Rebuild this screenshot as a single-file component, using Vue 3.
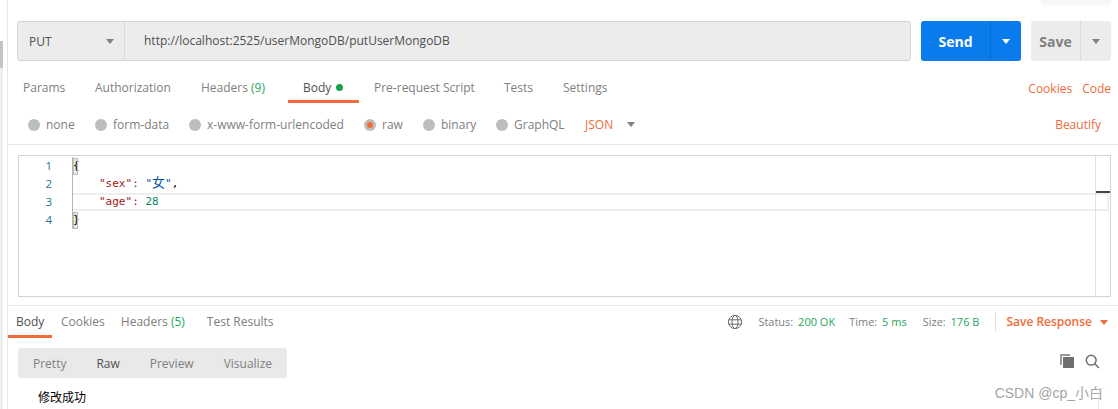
<script setup>
const reqTabs = [
  { label: 'Params', width: 72 },
  { label: 'Authorization', width: 106 },
  { label: 'Headers', count: '(9)', width: 83 },
]
const reqTabsRight = [
  { label: 'Pre-request Script', width: 130 },
  { label: 'Tests', width: 59 },
  { label: 'Settings', width: 60 },
]
const radios = [
  { label: 'none', width: 67 },
  { label: 'form-data', width: 94 },
  { label: 'x-www-form-urlencoded', width: 175 },
  { label: 'raw', on: true, width: 59 },
  { label: 'binary', width: 73 },
  { label: 'GraphQL', width: 71 },
]
const status = [
  { k: 'Status:', v: '200 OK' },
  { k: 'Time:', v: '5 ms' },
  { k: 'Size:', v: '176 B' },
]
</script>

<template>
  <div class="page">
    <div class="rail"><div class="thumb"></div></div>
    <div class="main">
      <div class="corner"><span></span></div>
      <div class="url-row">
        <div class="url-box">
          <div class="method"><span>PUT</span><i class="caret grey"></i></div>
          <div class="url">http://localhost:2525/userMongoDB/putUserMongoDB</div>
        </div>
        <div class="send">
          <span class="send-label">Send</span>
          <span class="send-drop"><i class="caret white"></i></span>
        </div>
        <div class="save">
          <span class="save-label">Save</span>
          <span class="save-drop"><i class="caret grey"></i></span>
        </div>
      </div>

      <div class="tabs">
        <span v-for="t in reqTabs" :key="t.label" class="tab" :style="{ width: t.width + 'px' }">
          {{ t.label }} <em v-if="t.count">{{ t.count }}</em>
        </span>
        <span class="tab body-tab">Body <b class="dot"></b></span>
        <span v-for="t in reqTabsRight" :key="t.label" class="tab" :style="{ width: t.width + 'px' }">{{ t.label }}</span>
        <span class="links"><span>Cookies</span><span>Code</span></span>
      </div>

      <div class="radios">
        <span v-for="r in radios" :key="r.label" class="radio" :style="{ width: r.width + 'px' }">
          <i class="disc" :class="{ on: r.on }"></i>{{ r.label }}
        </span>
        <span class="json">JSON</span><i class="caret grey json-caret"></i>
        <span class="beautify">Beautify</span>
      </div>

      <div class="editor-wrap">
        <div class="editor">
          <div class="gutter">
            <div>1</div><div>2</div><div>3</div><div>4</div>
          </div>
          <div class="code">
            <div class="line"><span class="br">{</span></div>
            <div class="line ind"><span class="key">"sex"</span><span class="colon">:</span> <span class="str">"<span class="cjk">女</span>"</span>,</div>
            <div class="line ind active"><span class="key">"age"</span><span class="colon">:</span> <span class="num">28</span></div>
            <div class="line"><span class="br">}</span></div>
          </div>
          <div class="ruler"><i></i></div>
        </div>
      </div>

      <div class="res-tabs">
        <span class="res-tab res-active">Body</span>
        <span class="res-tab cookies">Cookies</span>
        <span class="res-tab headers">Headers <em>(5)</em></span>
        <span class="res-tab tests">Test Results</span>
        <div class="status">
          <svg class="globe" width="16" height="16" viewBox="0 0 16 16" fill="none" stroke="#6b6b6b" stroke-width="1">
            <circle cx="8" cy="8" r="6.6" />
            <ellipse cx="8" cy="8" rx="3" ry="6.6" />
            <path d="M1.6 5.8h12.8M1.6 10.2h12.8" />
          </svg>
          <span v-for="s in status" :key="s.k" class="stat">{{ s.k }} <em>{{ s.v }}</em></span>
          <span class="save-res">Save Response<i class="caret orange"></i></span>
        </div>
      </div>

      <div class="view-row">
        <div class="views">
          <span>Pretty</span><span class="cur">Raw</span><span>Preview</span><span>Visualize</span>
        </div>
        <div class="tools">
          <svg width="15" height="15" viewBox="0 0 15 15">
            <path d="M0 0h10v2H2v9H0z" fill="#9a9a9a" />
            <rect x="3" y="3" width="11" height="11" fill="#6f6f6f" />
          </svg>
          <svg width="15" height="15" viewBox="0 0 15 15" fill="none" stroke="#6f6f6f" stroke-width="1.5">
            <circle cx="6.2" cy="6.2" r="4.9" />
            <path d="M9.8 9.8L14 14" />
          </svg>
        </div>
      </div>

      <div class="result">
        <span>修改成功</span>
        <span class="mark">CSDN @cp_小白</span>
      </div>
    </div>
  </div>
</template>

<style>
html, body { margin: 0; background: #fff; overflow: hidden; }
</style>

<style scoped>
.page {
  width: 1118px;
  height: 409px;
  display: flex;
  overflow: hidden;
  position: relative;
  font: 12px "Open Sans", "Noto Sans CJK SC", sans-serif;
  color: #808080;
  background: #fff;
}
.page::after {
  content: "";
  position: absolute;
  left: 1098px;
  top: 388px;
  width: 6px;
  height: 21px;
  border-left: 1px solid #e8e8e8;
  border-top: 1px solid #e8e8e8;
}
.rail {
  width: 8px;
  flex: none;
  box-sizing: border-box;
  border-right: 1px solid #e6e6e6;
  padding-top: 41px;
  background: linear-gradient(#fff 41px, #efefef 41px) 0 0 / 3px 100% no-repeat;
}
.thumb {
  width: 3px;
  height: 27px;
  background: #c4c4c4;
}
.main { flex: 1; min-width: 0; display: flex; flex-direction: column; }
.corner {
  height: 5px;
  margin-bottom: 16px;
  padding-right: 7px;
  display: flex;
  justify-content: flex-end;
}
.corner span {
  width: 70px;
  height: 5px;
  border-radius: 0 0 4px 4px;
  background: #f7f7f7;
}
.url-row {
  height: 40px;
  display: flex;
  padding-left: 9px;
}
.url-box {
  width: 894px;
  box-sizing: border-box;
  display: flex;
  background: #ececec;
  border: 1px solid #d4d4d4;
  border-radius: 3px;
}
.method {
  width: 107px;
  flex: none;
  box-sizing: border-box;
  display: flex;
  align-items: center;
  justify-content: space-between;
  padding: 1px 10px 0 11px;
  border-right: 1px solid #d9d9d9;
  color: #505050;
}
.url {
  flex: 1;
  padding-left: 19px;
  line-height: 38px;
  color: #505050;
}
.caret {
  display: inline-block;
  width: 0;
  height: 0;
  border-left: 4px solid transparent;
  border-right: 4px solid transparent;
  border-top: 5px solid #808080;
}
.caret.white { border-top-color: #fff; }
.caret.orange { border-top-color: #f26b3a; margin-left: 8px; vertical-align: 1px; }
.send {
  margin-left: 10px;
  width: 100px;
  display: flex;
  background: #097bed;
  border-radius: 3px;
  color: #fff;
  font-weight: 700;
  font-size: 14px;
}
.send-label { width: 69px; text-align: center; line-height: 41px; }
.send-drop {
  flex: 1;
  display: flex;
  align-items: center;
  justify-content: center;
  border-left: 1px solid #0a6bcc;
}
.save {
  margin-left: 10px;
  width: 80px;
  display: flex;
  background: #ececec;
  border-radius: 3px;
  font-weight: 700;
  font-size: 14px;
  color: #808080;
}
.save-label { width: 49px; text-align: center; line-height: 41px; }
.save-drop {
  flex: 1;
  display: flex;
  align-items: center;
  justify-content: center;
  border-left: 1px solid #d9d9d9;
}
.tabs {
  height: 42px;
  box-sizing: border-box;
  display: flex;
  align-items: center;
  padding-left: 15px;
  padding-top: 12px;
}
.tab { flex: none; white-space: nowrap; line-height: 30px; }
.tab em, .res-tab em, .stat em { font-style: normal; color: #26a65b; }
.stat em { margin-left: 2px; }
.body-tab {
  width: 71px;
  margin-left: 4px;
  margin-right: 15px;
  height: 30px;
  box-sizing: border-box;
  padding-left: 15px;
  border-bottom: 3px solid #f26b3a;
  color: #505050;
  align-self: flex-end;
}
.dot {
  display: inline-block;
  width: 7px;
  height: 7px;
  margin-left: 2px;
  border-radius: 50%;
  background: #16a34a;
  vertical-align: 1px;
}
.links {
  margin-left: auto;
  padding-right: 7px;
  display: flex;
  gap: 10px;
  color: #f26b3a;
}
.radios {
  height: 42px;
  box-sizing: border-box;
  display: flex;
  align-items: center;
  padding-left: 20px;
  padding-top: 2px;
  border-bottom: 1px solid #e6e6e6;
}
.radio { flex: none; display: flex; align-items: center; white-space: nowrap; }
.disc {
  width: 12px;
  height: 12px;
  flex: none;
  margin-right: 6px;
  border-radius: 50%;
  background: #bdbdbd;
}
.disc.on { position: relative; }
.disc.on::after {
  content: "";
  position: absolute;
  left: 3px;
  top: 3px;
  width: 6px;
  height: 6px;
  border-radius: 50%;
  background: #f26b3a;
}
.json { color: #f26b3a; margin-left: 18px; }
.json-caret { margin-left: 14px; }
.beautify { margin-left: auto; padding-right: 17px; color: #f26b3a; }
.editor-wrap { padding: 10px 7px 8px 10px; border-bottom: 1px solid #e6e6e6; }
.editor {
  height: 142px;
  box-sizing: border-box;
  display: flex;
  position: relative;
  padding-top: 1px;
  border: 1px solid #d4d4d4;
  font-size: 11px;
  line-height: 18px;
}
.gutter {
  width: 53px;
  flex: none;
  box-sizing: border-box;
  padding-right: 20px;
  text-align: right;
  color: #237893;
  font-size: 11.5px;
}
.code {
  flex: 1;
  border-left: 1px solid #b5b5b5;
  color: #000;
  height: 72px;
  font-family: "DejaVu Sans Mono", "Noto Sans CJK SC", monospace;
}
.line { height: 18px; white-space: pre; }
.ind { padding-left: 26px; }
.active {
  box-sizing: border-box;
  border: 2px solid #eeeeee;
  border-left: 0;
  line-height: 14px;
  margin-right: 1px;
}
.br {
  display: inline-block;
  width: 5px;
  height: 17px;
  line-height: 16px;
  background: #e4eadf;
  outline: 1px solid #bdbdbd;
  outline-offset: -1px;
}
.key { color: #a31515; }
.colon { color: #a31515; }
.str { color: #0451a5; }
.cjk { font-size: 13px; line-height: 1; }
.num { color: #09885a; }
.ruler {
  position: absolute;
  top: 0;
  bottom: 0;
  right: 0;
  width: 14px;
  border-left: 1px solid #e0e0e0;
}
.ruler i {
  display: block;
  margin-top: 35px;
  height: 2px;
  background: #444;
}
.res-tabs {
  height: 32px;
  flex: none;
  display: flex;
  align-items: flex-start;
  color: #808080;
  line-height: 32px;
}
.res-tab { flex: none; white-space: nowrap; height: 32px; box-sizing: border-box; }
.res-active {
  width: 44px;
  padding-left: 8px;
  border-bottom: 3px solid #f26b3a;
  color: #505050;
}
.cookies { margin-left: 9px; }
.headers { margin-left: 16px; }
.tests { margin-left: 22px; }
.status {
  margin-left: auto;
  padding-right: 10px;
  display: flex;
  align-items: center;
  height: 32px;
  font-size: 11px;
}
.globe { margin-right: 15px; }
.stat { margin-right: 14px; white-space: nowrap; }
.stat:nth-of-type(2) { margin-right: 16px; }
.stat:nth-of-type(3) { margin-right: 16px; }
.save-res {
  padding-left: 10px;
  border-left: 1px solid #e0e0e0;
  color: #f26b3a;
  font-size: 12px;
  font-weight: 600;
  line-height: 20px;
  white-space: nowrap;
}
.view-row {
  display: flex;
  justify-content: space-between;
  padding: 10px 18px 0 10px;
  height: 30px;
  flex: none;
}
.views {
  width: 269px;
  height: 30px;
  box-sizing: border-box;
  display: flex;
  align-items: center;
  justify-content: space-between;
  padding: 0 15px;
  background: #e9e9e9;
  border-radius: 3px;
}
.views .cur { color: #505050; }
.tools { display: flex; gap: 10px; align-items: center; height: 26px; }
.result {
  flex: 1;
  display: flex;
  justify-content: space-between;
  align-items: flex-start;
  padding: 11px 15px 0 30px;
  color: #000;
  line-height: 18px;
}
.mark {
  margin-top: -5px;
  font: 14px "Liberation Sans", "Noto Sans CJK SC", sans-serif;
  line-height: 18px;
  color: #a5a5a5;
}
</style>
